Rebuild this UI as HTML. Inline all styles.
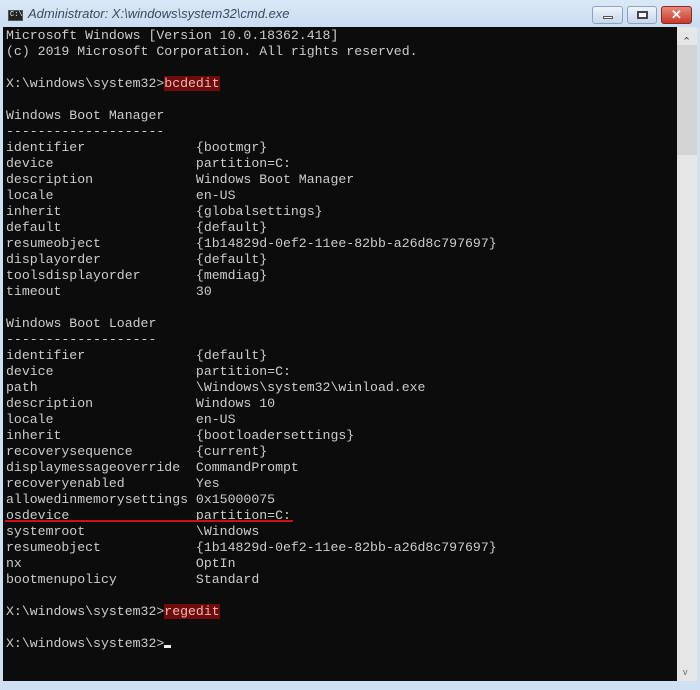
<!DOCTYPE html>
<html><head><style>
*{margin:0;padding:0;box-sizing:border-box}
body{width:700px;height:690px;background:#cfe0f3;position:relative;overflow:hidden;font-family:"Liberation Sans",sans-serif}
.title{position:absolute;left:0;top:0;width:700px;height:28px;background:linear-gradient(#dbe8f7,#c9dcf1)}
.icon{position:absolute;left:8px;top:10px;width:15px;height:11px;background:#222;border:1px solid #555}
.icon span{position:absolute;left:1px;top:1px;color:#fff;font-size:7px;font-family:"Liberation Mono",monospace;line-height:7px}
.ttext{position:absolute;left:28px;top:6px;font-size:13px;font-style:italic;color:#3a4a60}
.btn{position:absolute;top:6px;height:18px;border:1px solid #8da3c1;border-radius:3px;background:linear-gradient(#eef4fb,#c7d7ea)}
.con{position:absolute;left:3px;top:27px;width:674px;height:654px;background:#0c0c0c}
.sb{position:absolute;left:677px;top:27px;width:20px;height:654px;background:#e6e6e6}
pre{position:absolute;left:6px;top:28px;font-family:"Liberation Mono",monospace;font-size:13.2px;line-height:16px;color:#cccccc}
.hl{background:#6e0b0b;color:#f0b8b8}
.ul{position:absolute;left:5px;top:520px;width:288px;height:2px;background:#d01010}
</style></head><body>
<div class="title">
<div class="icon"><span>C:\</span></div>
<div class="ttext">Administrator: X:\windows\system32\cmd.exe</div>
<div class="btn" style="left:592px;width:31px"><div style="position:absolute;left:10px;top:9px;width:10px;height:3px;background:#fff;border:1px solid #556"></div></div>
<div class="btn" style="left:627px;width:30px"><div style="position:absolute;left:9px;top:4px;width:11px;height:8px;border:2px solid #445;background:#fff"></div></div>
<div class="btn" style="left:661px;width:31px;background:linear-gradient(#e88a7a,#c63a2a);border-color:#8a2a20;color:#fff;font-weight:bold;font-size:13px;text-align:center;line-height:16px">✕</div>
</div>
<div class="con"></div>
<div class="sb">
<div style="position:absolute;left:5px;top:8px;color:#444;font-size:11px">&#8963;</div>
<div style="position:absolute;left:0;top:18px;width:20px;height:110px;background:#d4d4d4"></div>
<div style="position:absolute;left:6px;top:640px;color:#666;font-size:9px">v</div>
</div>
<pre>Microsoft Windows [Version 10.0.18362.418]
(c) 2019 Microsoft Corporation. All rights reserved.

X:\windows\system32&gt;<span class="hl">bcdedit</span>

Windows Boot Manager
--------------------
identifier              {bootmgr}
device                  partition=C:
description             Windows Boot Manager
locale                  en-US
inherit                 {globalsettings}
default                 {default}
resumeobject            {1b14829d-0ef2-11ee-82bb-a26d8c797697}
displayorder            {default}
toolsdisplayorder       {memdiag}
timeout                 30

Windows Boot Loader
-------------------
identifier              {default}
device                  partition=C:
path                    \Windows\system32\winload.exe
description             Windows 10
locale                  en-US
inherit                 {bootloadersettings}
recoverysequence        {current}
displaymessageoverride  CommandPrompt
recoveryenabled         Yes
allowedinmemorysettings 0x15000075
osdevice                partition=C:
systemroot              \Windows
resumeobject            {1b14829d-0ef2-11ee-82bb-a26d8c797697}
nx                      OptIn
bootmenupolicy          Standard

X:\windows\system32&gt;<span class="hl">regedit</span>

X:\windows\system32&gt;<span style="display:inline-block;width:7px;height:3px;background:#eee;vertical-align:-1px"></span></pre>
<div class="ul"></div>
</body></html>
